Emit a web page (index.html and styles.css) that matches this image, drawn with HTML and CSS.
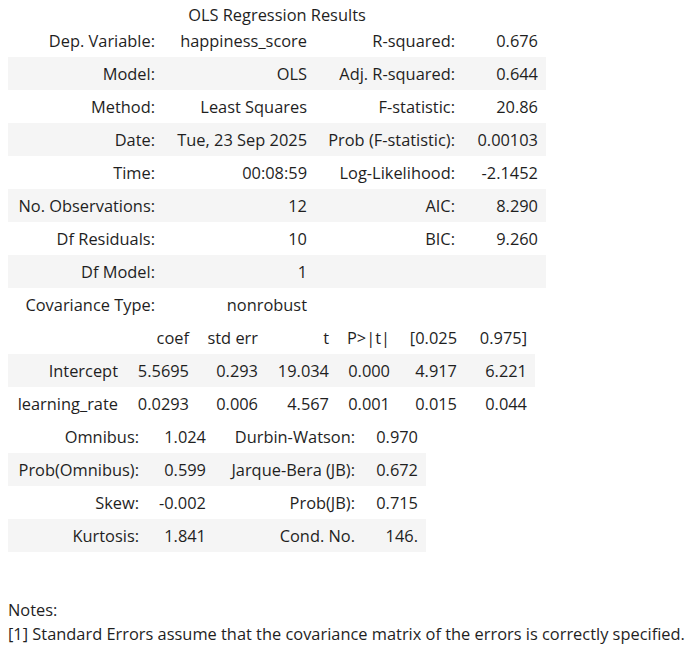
FILE: index.html
```html
<!DOCTYPE html>
<html>
<head>
<meta charset="utf-8">
<link rel="stylesheet" href="styles.css">
</head>
<body>
<div class="output">
<table class="simpletable t1">
<caption>OLS Regression Results</caption>
<colgroup><col class="c1a"><col class="c1b"><col class="c1c"><col class="c1d"></colgroup>
<tr><th>Dep. Variable:</th><td>happiness_score</td><th>R-squared:</th><td>0.676</td></tr>
<tr><th>Model:</th><td>OLS</td><th>Adj. R-squared:</th><td>0.644</td></tr>
<tr><th>Method:</th><td>Least Squares</td><th>F-statistic:</th><td>20.86</td></tr>
<tr><th>Date:</th><td>Tue, 23 Sep 2025</td><th>Prob (F-statistic):</th><td>0.00103</td></tr>
<tr><th>Time:</th><td>00:08:59</td><th>Log-Likelihood:</th><td>-2.1452</td></tr>
<tr><th>No. Observations:</th><td>12</td><th>AIC:</th><td>8.290</td></tr>
<tr><th>Df Residuals:</th><td>10</td><th>BIC:</th><td>9.260</td></tr>
<tr><th>Df Model:</th><td>1</td><th></th><td></td></tr>
<tr><th>Covariance Type:</th><td>nonrobust</td><th></th><td></td></tr>
</table>
<table class="simpletable t2">
<colgroup><col class="c2a"><col class="c2b"><col class="c2c"><col class="c2d"><col class="c2e"><col class="c2f"><col class="c2g"></colgroup>
<tr><td></td><th>coef</th><th>std err</th><th>t</th><th>P&gt;|t|</th><th>[0.025</th><th>0.975]</th></tr>
<tr><th>Intercept</th><td>5.5695</td><td>0.293</td><td>19.034</td><td>0.000</td><td>4.917</td><td>6.221</td></tr>
<tr><th>learning_rate</th><td>0.0293</td><td>0.006</td><td>4.567</td><td>0.001</td><td>0.015</td><td>0.044</td></tr>
</table>
<table class="simpletable t3">
<colgroup><col class="c3a"><col class="c3b"><col class="c3c"><col class="c3d"></colgroup>
<tr><th>Omnibus:</th><td>1.024</td><th>Durbin-Watson:</th><td>0.970</td></tr>
<tr><th>Prob(Omnibus):</th><td>0.599</td><th>Jarque-Bera (JB):</th><td>0.672</td></tr>
<tr><th>Skew:</th><td>-0.002</td><th>Prob(JB):</th><td>0.715</td></tr>
<tr><th>Kurtosis:</th><td>1.841</td><th>Cond. No.</th><td>146.</td></tr>
</table>
<div class="notes">Notes:<br>[1] Standard Errors assume that the covariance matrix of the errors is correctly specified.</div>
</div>
</body>
</html>
```
FILE: styles.css
```css
html, body {
  margin: 0;
  padding: 0;
  background: #fff;
}
body {
  padding: 5px 8px 0;
  font-family: "Open Sans", "Noto Sans", sans-serif;
  font-size: 16.4px;
  color: #1f1f1f;
}
.simpletable {
  border-collapse: collapse;
  border-spacing: 0;
  table-layout: fixed;
}
.simpletable caption {
  height: 19px;
  line-height: 19px;
  text-align: center;
}
.simpletable th,
.simpletable td {
  height: 33px;
  padding: 1px 8px 0;
  text-align: right;
  font-weight: normal;
  white-space: nowrap;
  box-sizing: border-box;
  line-height: 32px;
  vertical-align: middle;
}
.simpletable tr:nth-child(even) {
  background: #f5f5f5;
}
.t1 { width: 538px; }
.c1a { width: 155px; }
.c1b { width: 152px; }
.c1c { width: 148px; }
.c1d { width: 83px; }
.t2 { width: 527px; }
.c2a { width: 118px; }
.c2b { width: 71px; }
.c2c { width: 69px; }
.c2d { width: 71px; }
.c2e { width: 61px; }
.c2f { width: 67px; }
.c2g { width: 70px; }
.t3 { width: 418px; }
.c3a { width: 139px; }
.c3b { width: 67px; }
.c3c { width: 149px; }
.c3d { width: 63px; }
.notes {
  margin-top: 46px;
  line-height: 24px;
  white-space: nowrap;
}
```
